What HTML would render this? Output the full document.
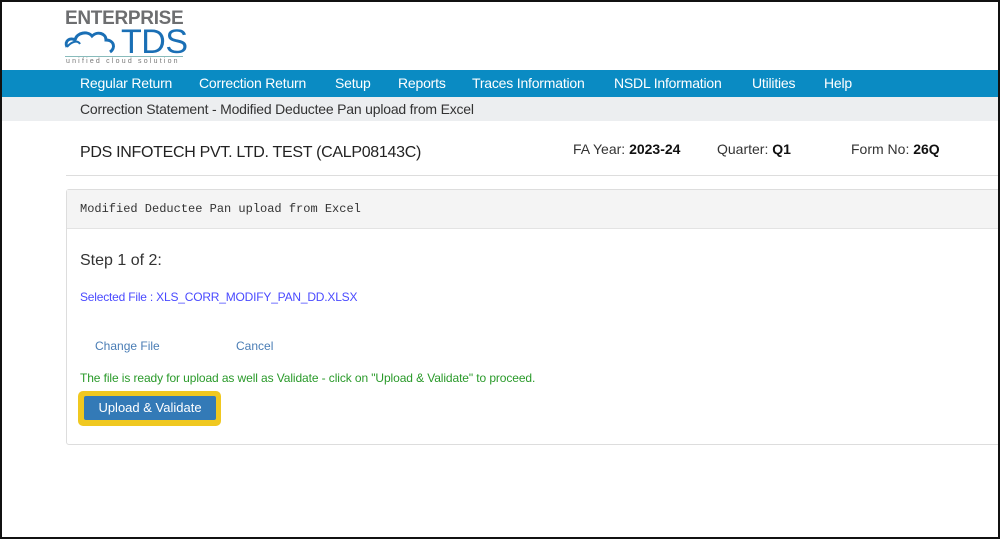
<!DOCTYPE html>
<html><head><style>
html,body{margin:0;padding:0}
body{width:1000px;height:539px;position:relative;overflow:hidden;background:#fff;font-family:"Liberation Sans",sans-serif;color:#333}
.frame{position:absolute;left:0;top:0;width:996px;height:535px;border:2px solid #111;pointer-events:none;z-index:10}
.abs{position:absolute;white-space:nowrap}
.nav{position:absolute;left:0;top:70px;width:1000px;height:27px;background:#0a8bc3}
.nav span{position:absolute;top:5px;color:#fff;font-size:14px;letter-spacing:-0.2px}
.sub{position:absolute;left:0;top:97px;width:1000px;height:24px;background:#eceef0}
</style></head><body>
<div class="frame"></div>
<div class="abs" style="left:65px;top:8px;font-size:19px;font-weight:bold;color:#6d6e70;letter-spacing:-0.3px">ENTERPRISE</div>
<svg class="abs" style="left:64px;top:28px" width="60" height="30" viewBox="0 0 60 30"><path d="M3 19 C0 13 6 9 11 12 C13 4 24 3 28 8 C33 3 42 5 42 12 C50 12 52 20 46 24" fill="none" stroke="#1a6fb5" stroke-width="3"/><path d="M3 19 C8 13 14 12 16 16" fill="none" stroke="#1a6fb5" stroke-width="2"/></svg>
<div class="abs" style="left:121px;top:23px;font-size:34px;color:#1a6fb5;letter-spacing:-0.5px">TDS</div>
<div class="abs" style="left:65px;top:56px;width:118px;border-top:1px solid #8bb;"></div>
<div class="abs" style="left:66px;top:58px;font-size:7px;color:#777;letter-spacing:2.2px">unified cloud solution</div>
<div class="nav">
<span style="left:80px">Regular Return</span>
<span style="left:199px">Correction Return</span>
<span style="left:335px">Setup</span>
<span style="left:398px">Reports</span>
<span style="left:472px">Traces Information</span>
<span style="left:614px">NSDL Information</span>
<span style="left:752px">Utilities</span>
<span style="left:824px">Help</span>
</div>
<div class="sub"><span class="abs" style="left:80px;top:4px;font-size:14px;color:#333;letter-spacing:-0.2px">Correction Statement - Modified Deductee Pan upload from Excel</span></div>
<div class="abs" style="left:80px;top:144px;font-size:16px;color:#222;letter-spacing:-0.3px">PDS INFOTECH PVT. LTD. TEST (CALP08143C)</div>
<div class="abs" style="left:573px;top:141px;font-size:14px;color:#333">FA Year: <b style="color:#111">2023-24</b></div>
<div class="abs" style="left:717px;top:141px;font-size:14px;color:#333">Quarter: <b style="color:#111">Q1</b></div>
<div class="abs" style="left:851px;top:141px;font-size:14px;color:#333">Form No: <b style="color:#111">26Q</b></div>
<div class="abs" style="left:66px;top:175px;width:940px;border-top:1px solid #ddd"></div>
<div class="abs" style="left:66px;top:189px;width:940px;height:254px;border:1px solid #ddd;border-radius:3px">
<div style="height:38px;background:#f4f4f4;border-bottom:1px solid #e3e3e3"></div>
</div>
<div class="abs" style="left:80px;top:202px;font-family:'Liberation Mono',monospace;font-size:12px;color:#333">Modified Deductee Pan upload from Excel</div>
<div class="abs" style="left:80px;top:252px;font-size:16px;color:#333">Step 1 of 2:</div>
<div class="abs" style="left:80px;top:290px;font-size:12px;color:#4a4aff;letter-spacing:-0.2px">Selected File : XLS_CORR_MODIFY_PAN_DD.XLSX</div>
<div class="abs" style="left:95px;top:339px;font-size:12px;color:#4a7db5">Change File</div>
<div class="abs" style="left:236px;top:339px;font-size:12px;color:#4a7db5">Cancel</div>
<div class="abs" style="left:80px;top:371px;font-size:12px;color:#2a9a2a;letter-spacing:-0.1px">The file is ready for upload as well as Validate - click on "Upload &amp; Validate" to proceed.</div>
<div class="abs" style="left:78px;top:391px;width:143px;height:35px;background:#f0c820;border-radius:5px"></div>
<div class="abs" style="left:84px;top:396px;width:132px;height:24px;background:#337ab7;border-radius:2px;color:#fff;font-size:13px;text-align:center;line-height:24px">Upload &amp; Validate</div>
</body></html>
